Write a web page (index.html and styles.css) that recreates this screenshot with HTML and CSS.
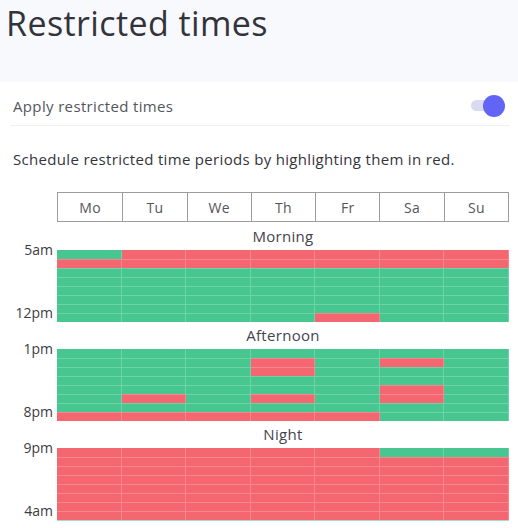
FILE: index.html
```html
<!DOCTYPE html>
<html lang="en">
<head>
    <meta charset="UTF-8">
    <meta name="viewport" content="width=device-width, initial-scale=1.0">
    <title>Restricted times</title>
    <link rel="stylesheet" href="styles.css">
</head>
<body>

    <!-- Page Header -->
    <div class="page-head">
        <h1>Restricted times</h1>
    </div>

    <!-- Toggle Row -->
    <div class="setting-row">
        <span>Apply restricted times</span>
        <div class="switch on">
            <span class="track"></span>
            <span class="knob"></span>
        </div>
    </div>

    <p class="hint">Schedule restricted time periods by highlighting them in red.</p>

    <!-- Schedule -->
    <div class="schedule" id="schedule">
        <div class="days">
            <div>Mo</div>
            <div>Tu</div>
            <div>We</div>
            <div>Th</div>
            <div>Fr</div>
            <div>Sa</div>
            <div>Su</div>
        </div>
    </div>
    <div class="next-edge"></div>

    <script>
        // G = allowed, R = restricted, one letter per day
        const periods = [
            {
                name: "Morning", from: "5am", to: "12pm",
                rows: ["GRRRRRR", "RRRRRRR", "GGGGGGG", "GGGGGGG", "GGGGGGG", "GGGGGGG", "GGGGGGG", "GGGGRGG"]
            },
            {
                name: "Afternoon", from: "1pm", to: "8pm",
                rows: ["GGGGGGG", "GGGRGRG", "GGGRGGG", "GGGGGGG", "GGGGGRG", "GRGRGRG", "GGGGGGG", "RRRRRGG"]
            },
            {
                name: "Night", from: "9pm", to: "4am",
                rows: ["RRRRRGG", "RRRRRRR", "RRRRRRR", "RRRRRRR", "RRRRRRR", "RRRRRRR", "RRRRRRR", "RRRRRRR"]
            }
        ];

        const schedule = document.getElementById("schedule");

        periods.forEach(period => {
            const title = document.createElement("div");
            title.className = "period-title";
            title.textContent = period.name;
            schedule.appendChild(title);

            period.rows.forEach((row, i) => {
                const line = document.createElement("div");
                line.className = i === 0 ? "hour-row first" : "hour-row";

                const label = document.createElement("div");
                label.className = "hour-label";
                if (i === 0) label.innerHTML = "<span>" + period.from + "</span>";
                if (i === period.rows.length - 1) label.innerHTML = "<span>" + period.to + "</span>";
                line.appendChild(label);

                row.split("").forEach(c => {
                    const cell = document.createElement("div");
                    cell.className = c === "R" ? "cell red" : "cell green";
                    cell.onclick = () => cell.classList.toggle("red");
                    line.appendChild(cell);
                });

                schedule.appendChild(line);
            });
        });
    </script>
</body>
</html>
```

FILE: styles.css
```css
/* General Styles */
* {
    margin: 0;
    padding: 0;
    box-sizing: border-box;
}
body {
    font-family: "Open Sans", "Noto Sans", sans-serif;
    background-color: #fff;
    color: #34343c;
    overflow: hidden;
}

/* Page Header */
.page-head {
    height: 82px;
    background-color: #f8f9fd;
    padding: 1px 6px 0;
}
.page-head h1 {
    font-size: 34px;
    font-weight: 400;
    line-height: 44px;
    letter-spacing: 0.4px;
    color: #33333b;
}

/* Toggle Row */
.setting-row {
    display: flex;
    justify-content: space-between;
    align-items: center;
    height: 44px;
    margin: 0 8px 0 10px;
    padding: 4px 0 0 3px;
    border-bottom: 1px solid #f0f0f3;
    font-size: 15px;
    letter-spacing: 0.35px;
    color: #55555c;
}
.switch {
    display: flex;
    align-items: center;
    width: 39px;
    height: 22px;
}
.switch .track {
    width: 27px;
    height: 11px;
    border-radius: 6px;
    background: #d8dbef;
}
.switch .knob {
    width: 22px;
    height: 22px;
    border-radius: 50%;
    background: #6164f4;
    margin-left: -15px;
}

.hint {
    margin: 23px 0 23px 13px;
    line-height: 20px;
    font-size: 15px;
    letter-spacing: 0.32px;
    color: #34343c;
}

/* Schedule */
.schedule {
    margin-right: 9px;
}
.days {
    display: grid;
    grid-template-columns: repeat(7, 1fr);
    margin-left: 57px;
    height: 30px;
    border: 1px solid #9c9c9c;
}
.days div {
    display: flex;
    align-items: center;
    justify-content: center;
    border-left: 1px solid #9c9c9c;
    font-size: 14px;
    letter-spacing: 0.3px;
    color: #55555c;
}
.days div:first-child {
    border-left: none;
}
.period-title {
    margin-left: 57px;
    height: 27px;
    line-height: 27px;
    text-align: center;
    font-size: 15px;
    letter-spacing: 0.3px;
    color: #44444c;
}
.days + .period-title {
    height: 28px;
    line-height: 28px;
}
.hour-row {
    display: grid;
    grid-template-columns: 57px repeat(7, 1fr);
    grid-template-rows: 9px;
    height: 9px;
}
.hour-label {
    height: 9px;
    text-align: right;
    padding-right: 4px;
    font-size: 14px;
    color: #3c3c44;
}
.hour-label span {
    display: block;
    line-height: 16px;
    transform: translateY(-8px);
}
.cell {
    cursor: pointer;
    box-shadow: inset -1px 1px 0 rgba(255, 255, 255, 0.22);
}
.hour-row.first .cell {
    box-shadow: inset -1px 0 0 rgba(255, 255, 255, 0.22);
}
.cell.green {
    background-color: #48c690;
}
.cell.red {
    background-color: #f46670;
}
.next-edge {
    height: 1px;
    margin: 0 9px 0 57px;
    background: #a9dcc6;
}
```
